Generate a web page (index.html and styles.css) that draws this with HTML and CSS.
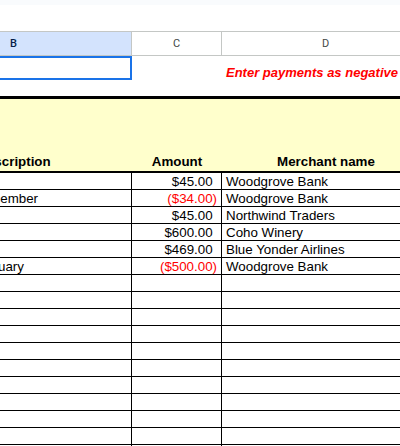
FILE: index.html
```html
<!DOCTYPE html>
<html>
<head>
<meta charset="utf-8">
<link rel="stylesheet" href="styles.css">
</head>
<body>
<div class="topbar"></div>
<div class="gap"></div>
<div class="colhead">
  <div class="ch active">B</div>
  <div class="ch">C</div>
  <div class="ch">D</div>
</div>
<div class="sheet">
  <div class="row r1">
    <div class="cell b sel"></div>
    <div class="cell c"></div>
    <div class="cell d note">Enter payments as negative numbers.</div>
  </div>
  <div class="row r2">
    <div class="cell b"></div><div class="cell c"></div><div class="cell d"></div>
  </div>
  <div class="row hdr">
    <div class="cell b">Description</div>
    <div class="cell c">Amount</div>
    <div class="cell d">Merchant name</div>
  </div>
  <div class="row data"><div class="cell b"></div><div class="cell c">$45.00</div><div class="cell d">Woodgrove Bank</div></div>
  <div class="row data"><div class="cell b">Payment for December</div><div class="cell c neg">($34.00)</div><div class="cell d">Woodgrove Bank</div></div>
  <div class="row data"><div class="cell b"></div><div class="cell c">$45.00</div><div class="cell d">Northwind Traders</div></div>
  <div class="row data"><div class="cell b"></div><div class="cell c">$600.00</div><div class="cell d">Coho Winery</div></div>
  <div class="row data"><div class="cell b"></div><div class="cell c">$469.00</div><div class="cell d">Blue Yonder Airlines</div></div>
  <div class="row data"><div class="cell b">Payment for January</div><div class="cell c neg">($500.00)</div><div class="cell d">Woodgrove Bank</div></div>
  <div class="row data"><div class="cell b"></div><div class="cell c"></div><div class="cell d"></div></div>
  <div class="row data"><div class="cell b"></div><div class="cell c"></div><div class="cell d"></div></div>
  <div class="row data"><div class="cell b"></div><div class="cell c"></div><div class="cell d"></div></div>
  <div class="row data"><div class="cell b"></div><div class="cell c"></div><div class="cell d"></div></div>
  <div class="row data"><div class="cell b"></div><div class="cell c"></div><div class="cell d"></div></div>
  <div class="row data"><div class="cell b"></div><div class="cell c"></div><div class="cell d"></div></div>
  <div class="row data"><div class="cell b"></div><div class="cell c"></div><div class="cell d"></div></div>
  <div class="row data"><div class="cell b"></div><div class="cell c"></div><div class="cell d"></div></div>
  <div class="row data"><div class="cell b"></div><div class="cell c"></div><div class="cell d"></div></div>
  <div class="row data"><div class="cell b"></div><div class="cell c"></div><div class="cell d"></div></div>
  <div class="row data"><div class="cell b"></div><div class="cell c"></div><div class="cell d"></div></div>
</div>
</body>
</html>
```

FILE: styles.css
```css
* { box-sizing: border-box; }
html, body { margin: 0; padding: 0; }
body {
  width: 400px;
  height: 446px;
  overflow: hidden;
  background: #fff;
  font-family: "Liberation Sans", Arial, sans-serif;
  color: #000;
}
.topbar { height: 5px; background: #f9fbfd; }
.gap { height: 26px; }
.colhead {
  display: grid;
  grid-template-columns: 236px 90px 208px;
  width: 534px;
  margin-left: -104px;
  height: 25px;
  border-top: 1px solid #c4c7c5;
  border-bottom: 1px solid #c4c7c5;
}
.ch {
  display: flex;
  align-items: center;
  justify-content: center;
  font-family: Roboto, "Liberation Sans", sans-serif;
  font-size: 11px;
  color: #444746;
  border-right: 1px solid #c4c7c5;
}
.ch.active {
  background: #d3e3fd;
  color: #041e49;
  font-weight: 500;
}
.sheet {
  width: 534px;
  margin-left: -104px;
}
.row {
  display: grid;
  grid-template-columns: 236px 90px 208px;
}
.cell {
  display: flex;
  align-items: flex-end;
  white-space: nowrap;
  min-width: 0;
  font-size: 13.33px;
  line-height: 13px;
}
.r1 { height: 24px; }
.r2 { height: 16px; }
.sel { border: 2px solid #1a73e8; }
.note {
  color: #f00;
  font-style: italic;
  font-weight: bold;
  font-size: 13px;
  line-height: 12px;
  padding-left: 4px;
  padding-bottom: 1.5px;
}
.hdr {
  height: 77px;
  background: #ffffcc;
  border-top: 3px solid #000;
  border-bottom: 2px solid #000;
}
.hdr .cell {
  justify-content: center;
  font-weight: bold;
  padding-bottom: 3px;
}
.data {
  height: 17px;
  border-bottom: 1px solid #000;
}
.data .cell { padding-bottom: 1px; }
.data .b, .data .c { border-right: 1px solid #000; }
.data .b { padding-left: 5px; }
.data .c { justify-content: flex-end; padding-right: 8.4px; }
.data .c.neg { color: #f00; padding-right: 4px; }
.data .d { padding-left: 4px; }
```
